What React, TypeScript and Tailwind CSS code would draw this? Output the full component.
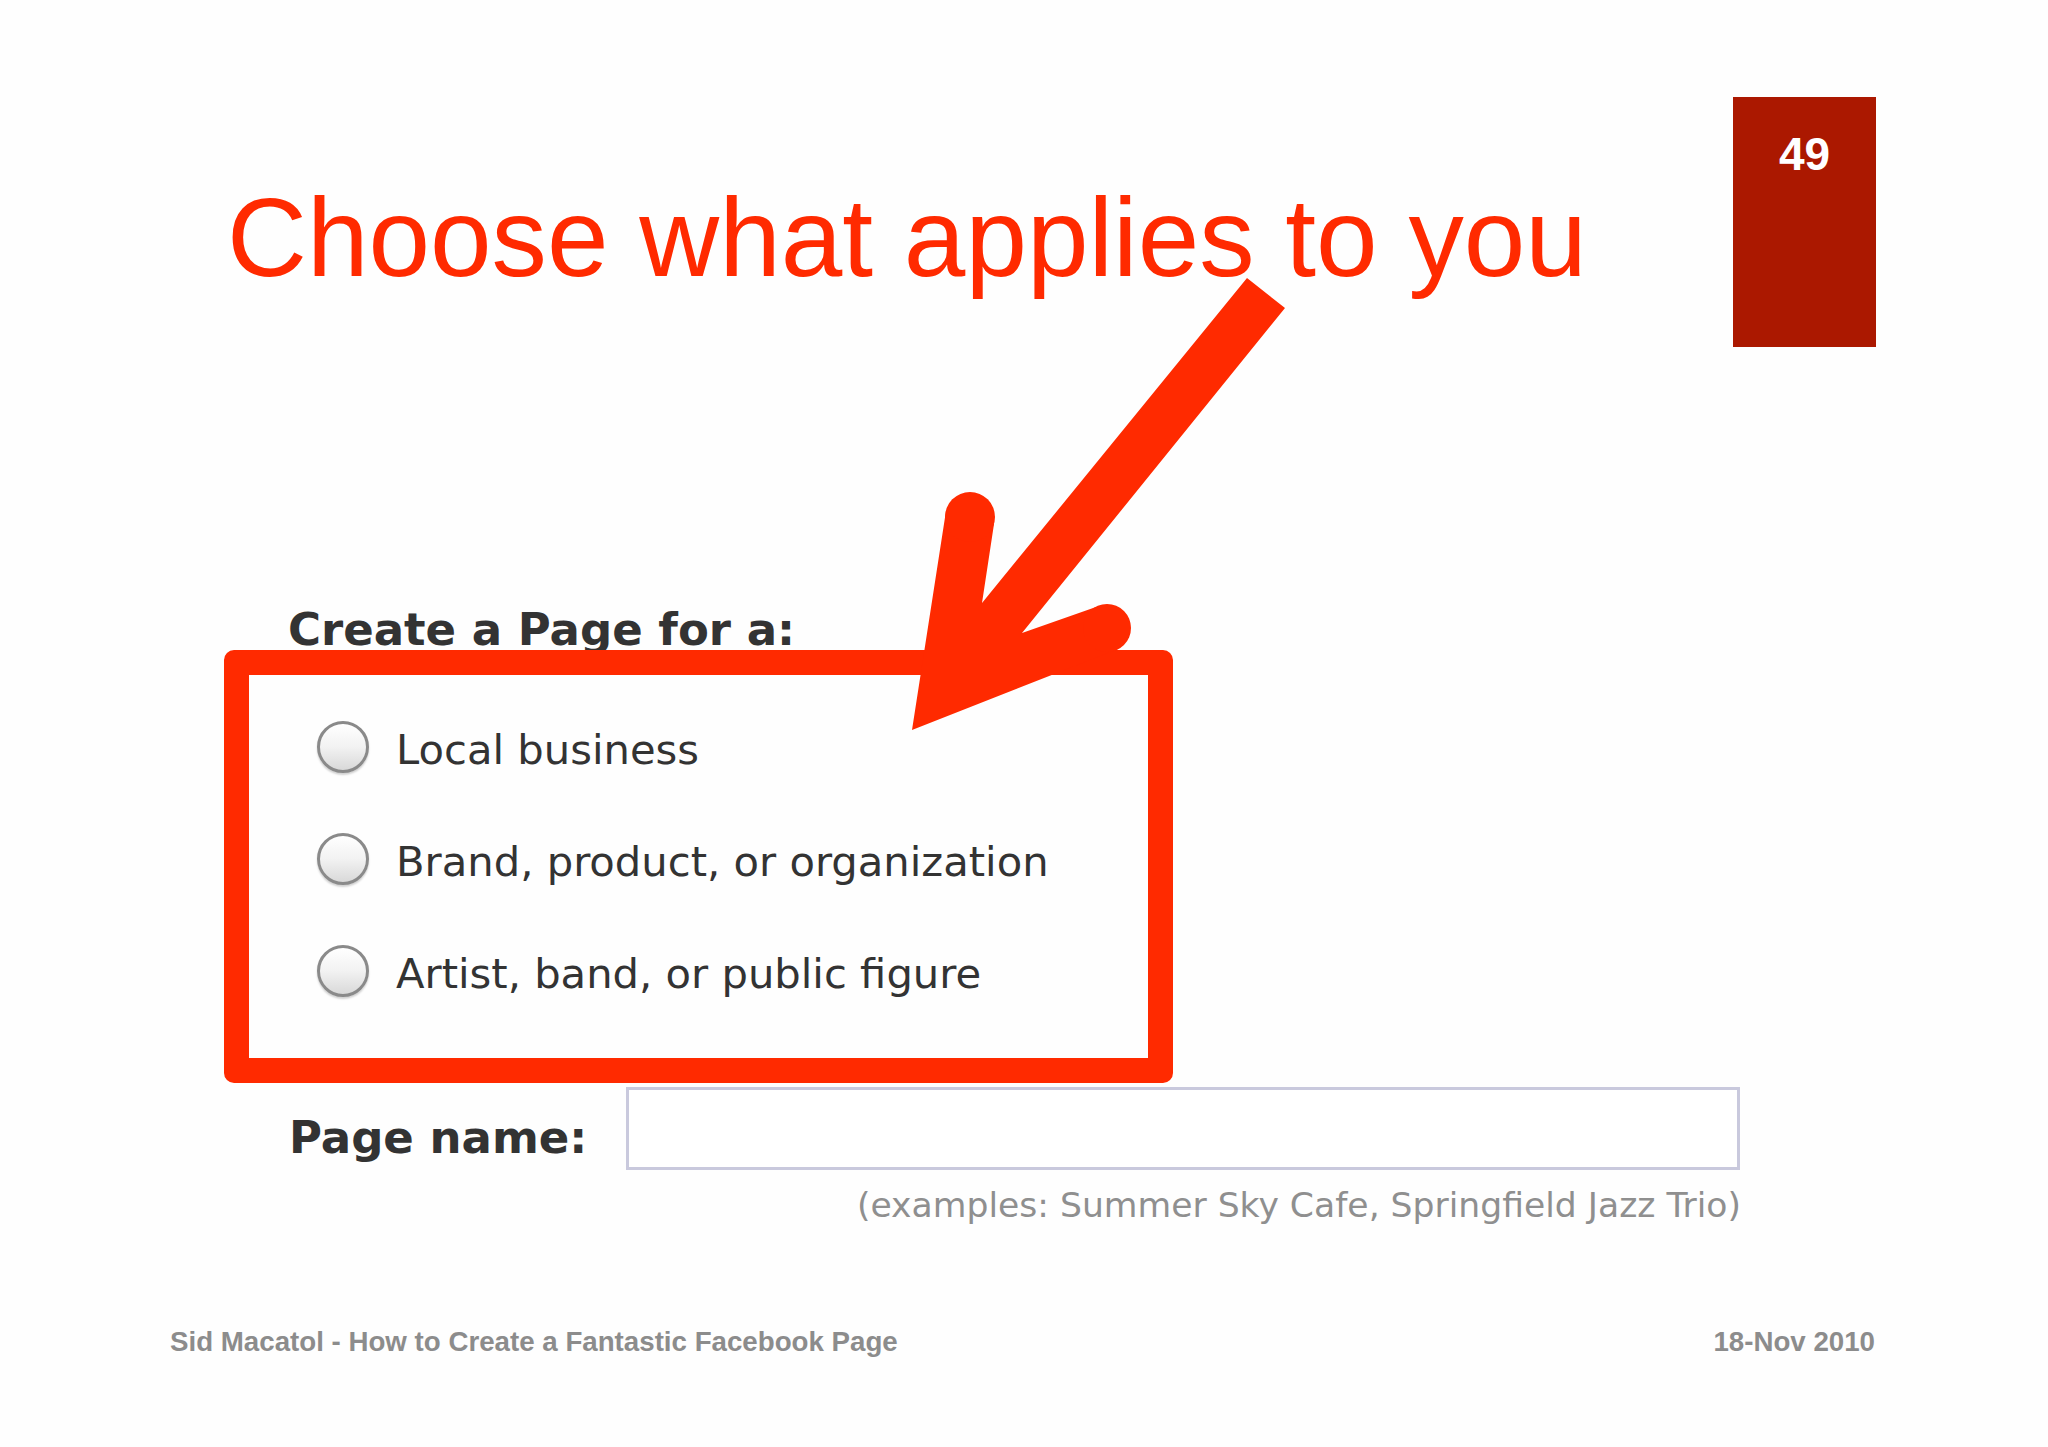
import React from "react";

const FB = { fontFamily: '"DejaVu Sans", Verdana, sans-serif' } as const;
const AR = { fontFamily: '"Liberation Sans", Arial, sans-serif' } as const;

function Radio() {
  return (
    <div className="w-[52px] h-[52px] shrink-0 rounded-full border-[3px] border-[#8a8a8a] bg-gradient-to-b from-[#ffffff] via-[#f2f2f2] to-[#d9d9d9] shadow-[0_2px_2px_rgba(0,0,0,0.18)]" />
  );
}

function Option({ label }: { label: string }) {
  return (
    <div className="flex items-center h-[112px]">
      <Radio />
      <span
        className="ml-[27px] mt-[6px] text-[41.7px] leading-[50px] text-[#333333] whitespace-nowrap"
        style={FB}
      >
        {label}
      </span>
    </div>
  );
}

export default function App() {
  return (
    <div className="relative w-[2048px] h-[1447px] bg-[#fefefe] overflow-hidden">
      {/* header */}
      <div className="flex items-start pt-[97px]">
        <h1
          className="ml-[227px] mt-[86px] text-[110.7px] leading-[110px] text-[#ff2a00] whitespace-nowrap font-normal"
          style={AR}
        >
          Choose what applies to you
        </h1>
        <div className="ml-auto mr-[172px] w-[143px] h-[250px] bg-[#ab1800] flex justify-center pt-[34px] shrink-0">
          <span className="text-[46px] leading-[46px] font-bold text-white" style={AR}>
            49
          </span>
        </div>
      </div>

      {/* form */}
      <div
        className="mt-[260px] ml-[288px] h-[43px] text-[45px] leading-[45px] font-bold text-[#333333] whitespace-nowrap"
        style={FB}
      >
        Create a Page for a:
      </div>
      <div className="relative ml-[224px] w-[949px] h-[433px] border-[25px] border-[#ff2a00] rounded-[10px] pt-[16px] pl-[68px] bg-[#fefefe]">
        <Option label="Local business" />
        <Option label="Brand, product, or organization" />
        <Option label="Artist, band, or public figure" />
      </div>

      <div className="flex items-start mt-[4px] ml-[289px]">
        <div
          className="w-[337px] shrink-0 mt-[28px] text-[45px] leading-[45px] font-bold text-[#333333] whitespace-nowrap"
          style={FB}
        >
          Page name:
        </div>
        <div className="w-[1114px] h-[83px] border-[3px] border-[#c9c9dd] bg-white" />
      </div>
      <div
        className="w-[1741px] mt-[18px] text-right text-[34.6px] leading-[34px] text-[#8f8f8f] whitespace-nowrap"
        style={FB}
      >
        (examples: Summer Sky Cafe, Springfield Jazz Trio)
      </div>

      {/* footer */}
      <div
        className="flex justify-between items-baseline mt-[106px] ml-[170px] mr-[173px] text-[27.7px] leading-[27px] font-bold text-[#8c8c8c]"
        style={AR}
      >
        <span>Sid Macatol - How to Create a Fantastic Facebook Page</span>
        <span>18-Nov 2010</span>
      </div>

      {/* arrow overlay */}
      <svg
        className="absolute left-0 top-0 pointer-events-none"
        width={2048}
        height={1447}
        viewBox="0 0 2048 1447"
      >
        <g fill="#ff2a00">
          <polygon points="912,730 946,511 994,524 982,603 1247,278 1285,308 1022,633 1096,607 1118,649" />
          <circle cx={970} cy={517} r={25} />
          <circle cx={1107} cy={628} r={24} />
        </g>
      </svg>
    </div>
  );
}
